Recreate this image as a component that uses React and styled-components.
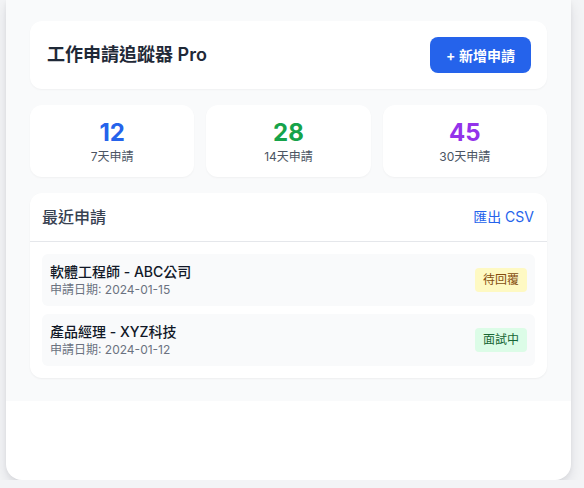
import React from "react";
import styled, { createGlobalStyle } from "styled-components";

const GlobalStyle = createGlobalStyle`
  html, body {
    margin: 0;
    padding: 0;
    background: #f3f4f6;
  }
  body {
    font-family: Inter, "Noto Sans CJK TC", "Noto Sans", sans-serif;
    -webkit-font-smoothing: antialiased;
  }
  * {
    box-sizing: border-box;
  }
`;

const stats = [
  { value: 12, label: "7天申請", color: "#2563eb" },
  { value: 28, label: "14天申請", color: "#16a34a" },
  { value: 45, label: "30天申請", color: "#9333ea" },
];

const applications = [
  {
    title: "軟體工程師 - ABC公司",
    date: "2024-01-15",
    status: "待回覆",
    tone: "pending",
  },
  {
    title: "產品經理 - XYZ科技",
    date: "2024-01-12",
    status: "面試中",
    tone: "interview",
  },
];

function App() {
  return (
    <>
      <GlobalStyle />
      <Shell>
        <Main>
          <Header>
            <Title>工作申請追蹤器 Pro</Title>
            <AddButton type="button">+ 新增申請</AddButton>
          </Header>

          <StatsGrid>
            {stats.map((item) => (
              <StatCard key={item.label}>
                <StatValue $color={item.color}>{item.value}</StatValue>
                <StatLabel>{item.label}</StatLabel>
              </StatCard>
            ))}
          </StatsGrid>

          <ListCard>
            <ListHeader>
              <ListTitle>最近申請</ListTitle>
              <ExportLink type="button">匯出 CSV</ExportLink>
            </ListHeader>
            <List>
              {applications.map((app) => (
                <Item key={app.title}>
                  <ItemText>
                    <ItemTitle>{app.title}</ItemTitle>
                    <ItemDate>申請日期: {app.date}</ItemDate>
                  </ItemText>
                  <Badge $tone={app.tone}>{app.status}</Badge>
                </Item>
              ))}
            </List>
          </ListCard>
        </Main>
      </Shell>
    </>
  );
}

const Shell = styled.div`
  width: 565px;
  height: 480px;
  margin-left: 6px;
  background: #ffffff;
  border-radius: 0 0 16px 16px;
  box-shadow: 0 6px 14px rgba(17, 24, 39, 0.1), 0 2px 4px rgba(17, 24, 39, 0.05);
  overflow: hidden;
`;

const Main = styled.div`
  background: #f9fafb;
  padding: 21px 24px 23px;
  display: flex;
  flex-direction: column;
  gap: 16px;
`;

const Header = styled.div`
  display: flex;
  align-items: center;
  justify-content: space-between;
  padding: 16px 16px 16px 17px;
  background: #ffffff;
  border-radius: 12px;
  box-shadow: 0 1px 2px rgba(0, 0, 0, 0.04);
`;

const Title = styled.h1`
  margin: 0;
  font-size: 18px;
  font-weight: 600;
  color: #1f2937;
  line-height: 28px;
`;

const AddButton = styled.button`
  height: 36px;
  padding: 0 16px;
  border: none;
  border-radius: 8px;
  background: #2563eb;
  color: #ffffff;
  font-family: inherit;
  font-size: 14px;
  font-weight: 600;
  cursor: pointer;
`;

const StatsGrid = styled.div`
  display: grid;
  grid-template-columns: repeat(3, 1fr);
  gap: 12px;
`;

const StatCard = styled.div`
  display: flex;
  flex-direction: column;
  align-items: center;
  padding: 12px;
  background: #ffffff;
  border-radius: 12px;
  box-shadow: 0 1px 2px rgba(0, 0, 0, 0.04);
`;

const StatValue = styled.div`
  font-size: 24px;
  line-height: 32px;
  font-weight: 700;
  color: ${(p) => p.$color};
`;

const StatLabel = styled.div`
  font-size: 12px;
  line-height: 16px;
  color: #4b5563;
`;

const ListCard = styled.div`
  background: #ffffff;
  border-radius: 12px;
  box-shadow: 0 1px 2px rgba(0, 0, 0, 0.05);
`;

const ListHeader = styled.div`
  display: flex;
  align-items: center;
  justify-content: space-between;
  padding: 12px 13px 12px 12px;
  border-bottom: 1px solid #e5e7eb;
`;

const ListTitle = styled.h2`
  margin: 0;
  font-size: 16px;
  line-height: 24px;
  font-weight: 500;
  color: #374151;
`;

const ExportLink = styled.button`
  padding: 0;
  border: none;
  background: none;
  color: #2563eb;
  font-family: inherit;
  font-size: 14px;
  line-height: 20px;
  cursor: pointer;
`;

const List = styled.div`
  display: flex;
  flex-direction: column;
  gap: 8px;
  padding: 12px;
`;

const Item = styled.div`
  display: flex;
  align-items: center;
  justify-content: space-between;
  padding: 8px;
  background: #f9fafb;
  border-radius: 6px;
`;

const ItemText = styled.div`
  display: flex;
  flex-direction: column;
`;

const ItemTitle = styled.div`
  font-size: 14px;
  line-height: 20px;
  font-weight: 500;
  color: #111827;
`;

const ItemDate = styled.div`
  font-size: 12px;
  line-height: 16px;
  color: #6b7280;
`;

const badgeTones = {
  pending: { bg: "#fef9c3", fg: "#854d0e" },
  interview: { bg: "#dcfce7", fg: "#166534" },
};

const Badge = styled.span`
  padding: 4px 8px;
  border-radius: 4px;
  font-size: 12px;
  line-height: 16px;
  background: ${(p) => badgeTones[p.$tone].bg};
  color: ${(p) => badgeTones[p.$tone].fg};
`;

export default App;
